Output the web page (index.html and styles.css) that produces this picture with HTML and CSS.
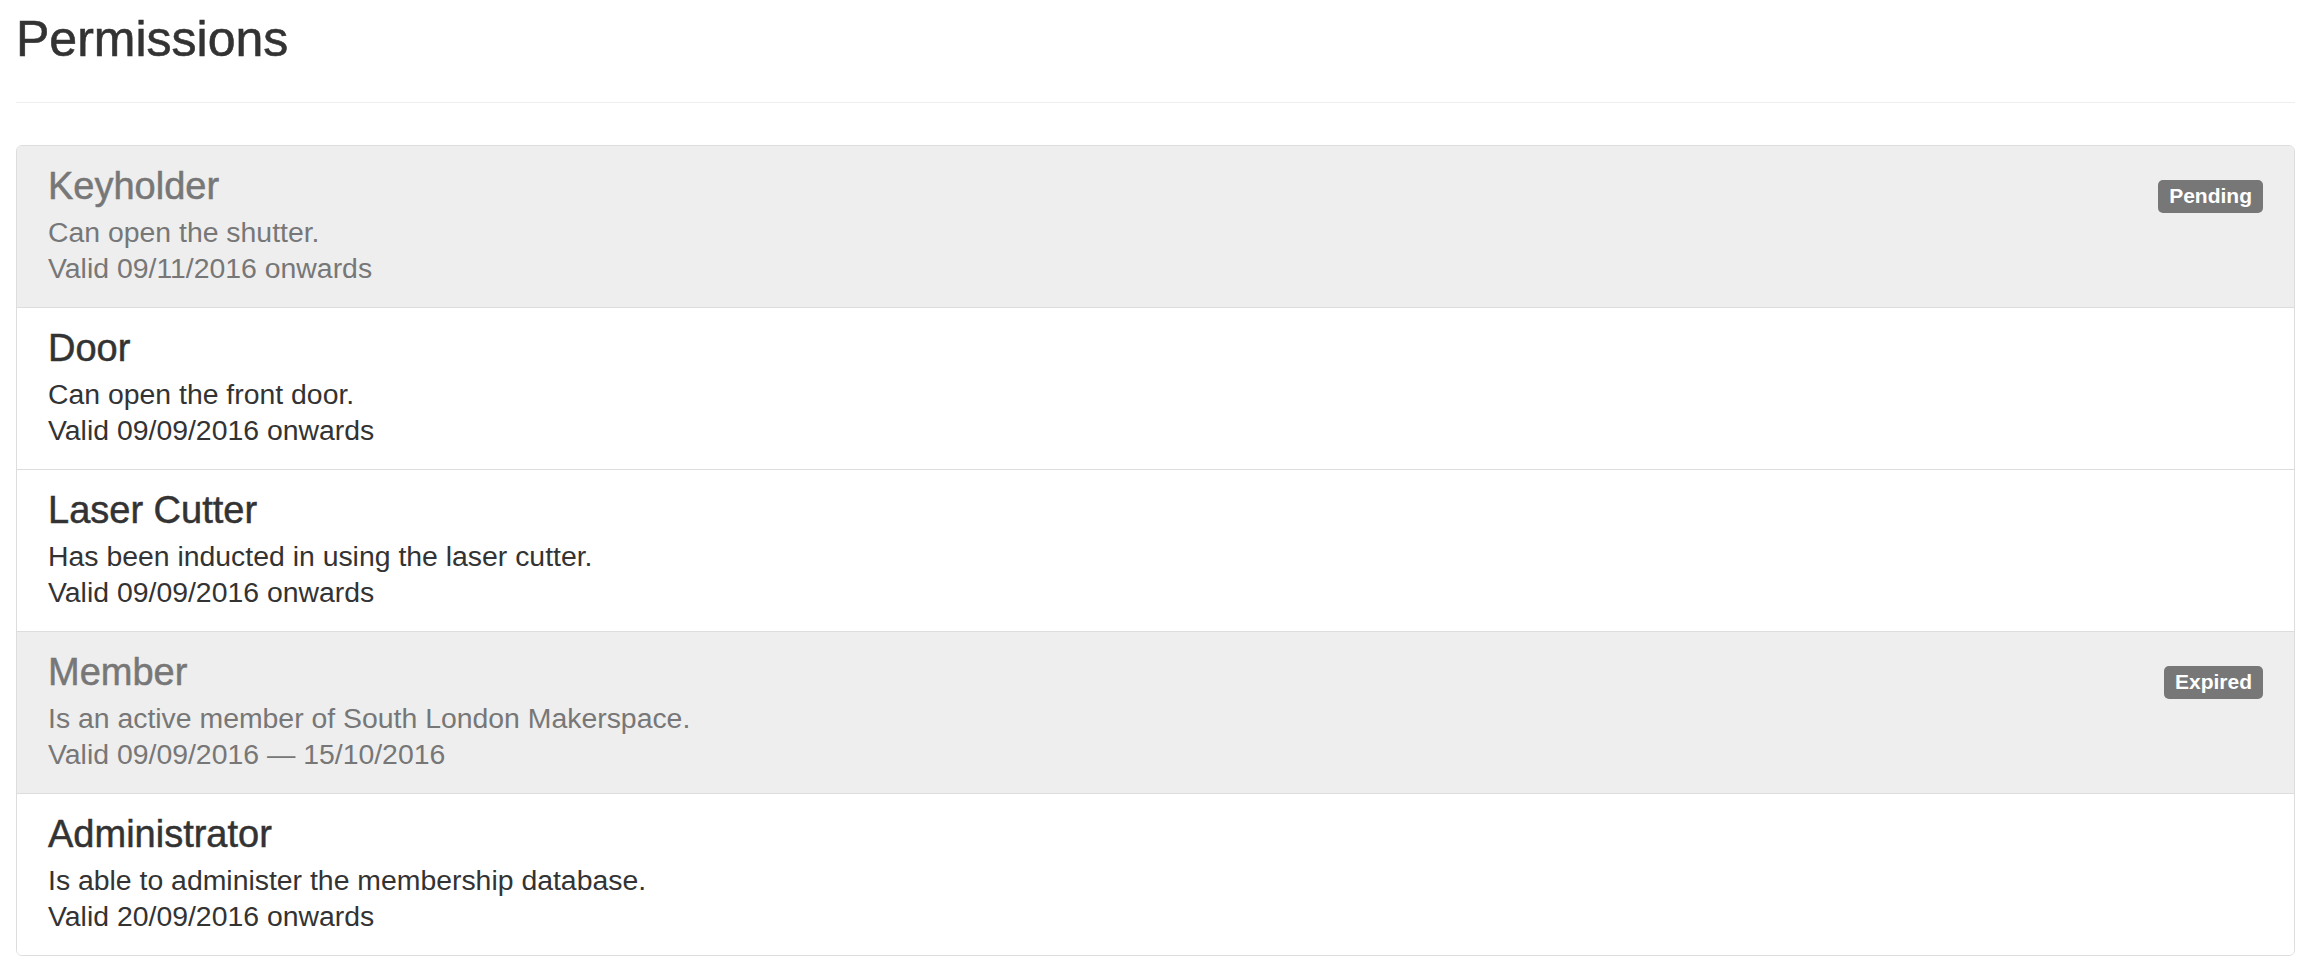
FILE: index.html
```html
<!DOCTYPE html>
<html lang="en">
<head>
    <meta charset="UTF-8">
    <title>Permissions</title>
    <link rel="stylesheet" href="styles.css">
</head>
<body>
    <div class="container">
        <h1 class="page-title">Permissions</h1>
        <hr class="divider">

        <!-- Permission list -->
        <ul class="perm-list">
            <li class="perm-item is-disabled">
                <div class="perm-body">
                    <h4 class="perm-name">Keyholder</h4>
                    <p class="perm-text">Can open the shutter.<br>Valid 09/11/2016 onwards</p>
                </div>
                <span class="perm-label">Pending</span>
            </li>
            <li class="perm-item">
                <div class="perm-body">
                    <h4 class="perm-name">Door</h4>
                    <p class="perm-text">Can open the front door.<br>Valid 09/09/2016 onwards</p>
                </div>
            </li>
            <li class="perm-item">
                <div class="perm-body">
                    <h4 class="perm-name">Laser Cutter</h4>
                    <p class="perm-text">Has been inducted in using the laser cutter.<br>Valid 09/09/2016 onwards</p>
                </div>
            </li>
            <li class="perm-item is-disabled">
                <div class="perm-body">
                    <h4 class="perm-name">Member</h4>
                    <p class="perm-text">Is an active member of South London Makerspace.<br>Valid 09/09/2016 — 15/10/2016</p>
                </div>
                <span class="perm-label">Expired</span>
            </li>
            <li class="perm-item">
                <div class="perm-body">
                    <h4 class="perm-name">Administrator</h4>
                    <p class="perm-text">Is able to administer the membership database.<br>Valid 20/09/2016 onwards</p>
                </div>
            </li>
        </ul>
    </div>
</body>
</html>
```

FILE: styles.css
```css
body {
    margin: 0;
    background-color: #fff;
    color: #333;
    font-family: "Liberation Sans", Arial, sans-serif;
}
.container {
    padding: 0 19px 0 16px;
}

.page-title {
    margin: 12px 0 0;
    font-size: 50px;
    font-weight: normal;
    line-height: 54px;
    color: #333;
    -webkit-text-stroke: 0.6px currentColor; /* closer to the medium heading weight */
}
.divider {
    margin: 36px 0 42px;
    border: 0;
    border-top: 1px solid #eee;
}

.perm-list {
    list-style: none;
    margin: 0;
    padding: 0;
    border: 1px solid #ddd;
    border-radius: 6px;
    overflow: hidden;
}
.perm-item {
    display: flex;
    justify-content: space-between;
    align-items: flex-start;
    padding: 20px 31px 21px;
    background-color: #fff;
    border-top: 1px solid #ddd;
}
.perm-item:first-child {
    border-top: 0;
}
.perm-item.is-disabled {
    background-color: #eee;
    color: #777;
}
.perm-name {
    margin: 0 0 8px;
    font-size: 38px;
    font-weight: normal;
    line-height: 40px;
    -webkit-text-stroke: 0.5px currentColor;
}
.perm-text {
    margin: 0;
    font-size: 28.4px;
    line-height: 36px;
}
.perm-label {
    margin-top: 14px;
    padding: 5px 11px 7px;
    font-size: 21px;
    font-weight: bold;
    line-height: 21px;
    color: #fff;
    background-color: #777;
    border-radius: 5px;
}
```
